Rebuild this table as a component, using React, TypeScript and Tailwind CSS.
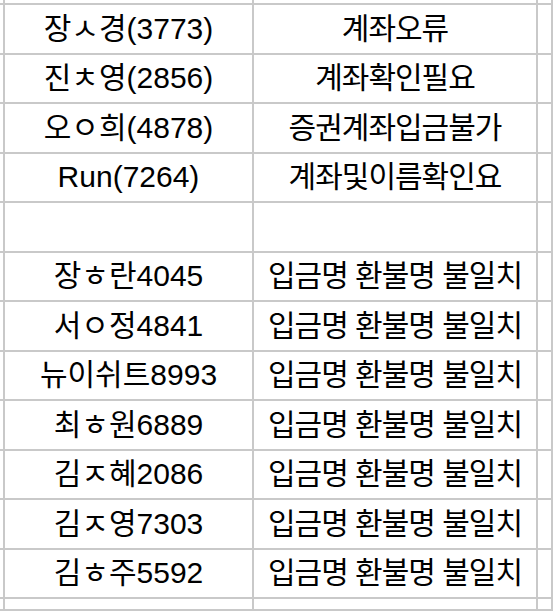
const rows: [string, string][] = [
  ["장ㅅ경(3773)", "계좌오류"],
  ["진ㅊ영(2856)", "계좌확인필요"],
  ["오ㅇ희(4878)", "증권계좌입금불가"],
  ["Run(7264)", "계좌및이름확인요"],
  ["", ""],
  ["장ㅎ란4045", "입금명 환불명 불일치"],
  ["서ㅇ정4841", "입금명 환불명 불일치"],
  ["뉴이쉬트8993", "입금명 환불명 불일치"],
  ["최ㅎ원6889", "입금명 환불명 불일치"],
  ["김ㅈ혜2086", "입금명 환불명 불일치"],
  ["김ㅈ영7303", "입금명 환불명 불일치"],
  ["김ㅎ주5592", "입금명 환불명 불일치"],
]

const cell = "border-r-2 border-b-2 border-[#c9c9c9] flex items-center justify-center"

const App = () => {
  return (
    <div
      className="w-[553px] h-[611px] overflow-hidden bg-white text-[30px] text-black leading-none"
      style={{ fontFamily: '"Liberation Sans", "Noto Sans CJK KR", sans-serif' }}
    >
      <div className="grid grid-cols-[5px_249px_284px_1fr] grid-rows-[5px_repeat(12,49.5px)_1fr] h-full">
        <div className={cell} />
        <div className={cell} />
        <div className={cell} />
        <div className={cell} />
        {rows.map(([name, note], i) => (
          <div key={i} className="contents">
            <div className={cell} />
            <div className={cell}>{name}</div>
            <div className={`${cell} tracking-[-1px]`}>{note}</div>
            <div className={cell} />
          </div>
        ))}
        <div className={cell} />
        <div className={cell} />
        <div className={cell} />
        <div className={cell} />
      </div>
    </div>
  )
}

export default App
